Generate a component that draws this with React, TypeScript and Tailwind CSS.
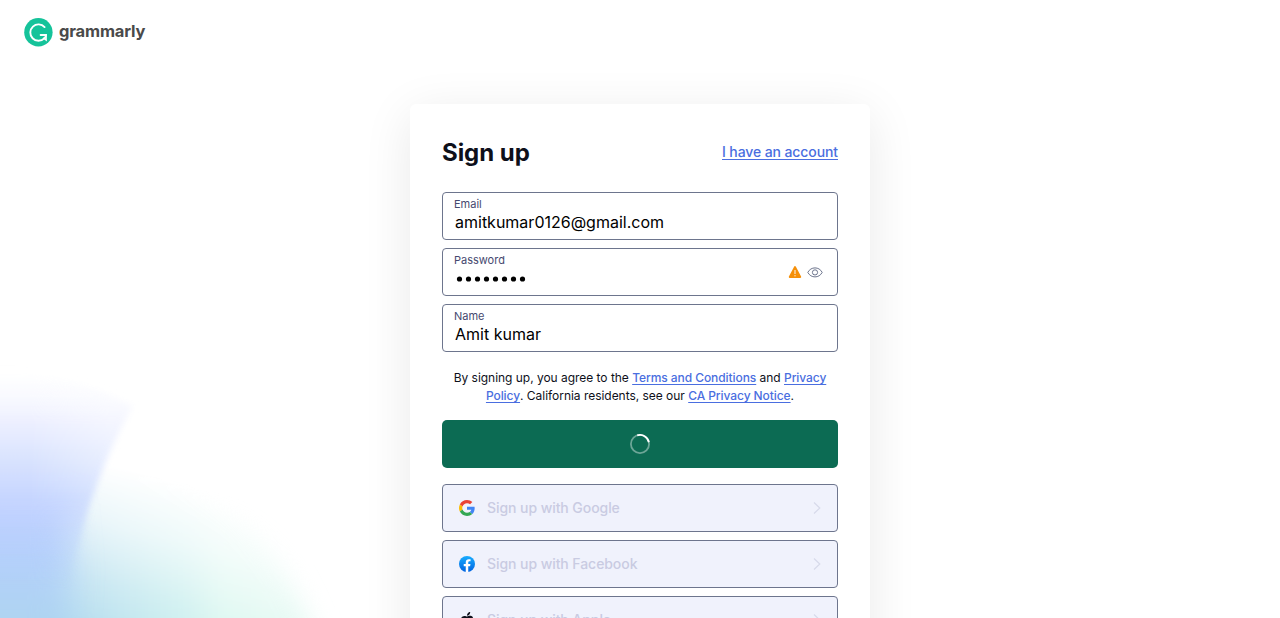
import type { ReactNode } from "react";

function Backdrop() {
  return (
    <svg
      className="pointer-events-none absolute bottom-0 left-0"
      width="400"
      height="268"
      viewBox="0 350 400 268"
      aria-hidden="true"
    >
      <defs>
        <linearGradient id="mint" gradientUnits="userSpaceOnUse" x1="0" y1="0" x2="350" y2="0">
          <stop offset="0" stopColor="#a9d2f3" />
          <stop offset="0.28" stopColor="#b7dfee" />
          <stop offset="0.54" stopColor="#c6eeec" />
          <stop offset="0.63" stopColor="#d6f6ee" />
          <stop offset="0.85" stopColor="#dcf8ef" />
          <stop offset="1" stopColor="#f2fdf9" />
        </linearGradient>
        <linearGradient id="fade" gradientUnits="userSpaceOnUse" x1="50" y1="450" x2="10" y2="612">
          <stop offset="0" stopColor="#fff" stopOpacity="0" />
          <stop offset="0.35" stopColor="#fff" stopOpacity="0.3" />
          <stop offset="0.7" stopColor="#fff" stopOpacity="0.72" />
          <stop offset="1" stopColor="#fff" />
        </linearGradient>
        <mask id="fadeMask" maskUnits="userSpaceOnUse" x="-20" y="350" width="420" height="300">
          <rect x="-20" y="350" width="420" height="300" fill="url(#fade)" />
        </mask>
        <linearGradient id="blue" gradientUnits="userSpaceOnUse" x1="0" y1="370" x2="0" y2="618">
          <stop offset="0" stopColor="#f8faff" stopOpacity="0" />
          <stop offset="0.2" stopColor="#eef0ff" />
          <stop offset="0.36" stopColor="#d9e3fe" />
          <stop offset="0.58" stopColor="#bfd0ff" />
          <stop offset="0.78" stopColor="#b4d0fb" />
          <stop offset="1" stopColor="#aed4f1" />
        </linearGradient>
        <linearGradient id="base" gradientUnits="userSpaceOnUse" x1="0" y1="500" x2="0" y2="618">
          <stop offset="0" stopColor="#bfd0ff" />
          <stop offset="0.5" stopColor="#b4d0fb" />
          <stop offset="1" stopColor="#aed4f1" />
        </linearGradient>
        <linearGradient id="side" gradientUnits="userSpaceOnUse" x1="0" y1="500" x2="0" y2="590">
          <stop offset="0" stopColor="#fff" />
          <stop offset="1" stopColor="#fff" stopOpacity="0" />
        </linearGradient>
        <linearGradient id="across" gradientUnits="userSpaceOnUse" x1="30" y1="0" x2="110" y2="0">
          <stop offset="0" stopColor="#fff" />
          <stop offset="1" stopColor="#fff" stopOpacity="0.6" />
        </linearGradient>
        <mask id="sideMask" maskUnits="userSpaceOnUse" x="-20" y="350" width="240" height="300">
          <rect x="-20" y="350" width="240" height="300" fill="url(#side)" />
        </mask>
        <mask id="acrossMask" maskUnits="userSpaceOnUse" x="-20" y="350" width="240" height="300">
          <rect x="-20" y="350" width="240" height="300" fill="url(#across)" />
        </mask>
        <filter id="soft" x="-20%" y="-20%" width="140%" height="140%">
          <feGaussianBlur stdDeviation="12" />
        </filter>
        <filter id="edge" x="-20%" y="-20%" width="140%" height="140%">
          <feGaussianBlur stdDeviation="3" />
        </filter>
        <filter id="wide" x="-40%" y="-40%" width="180%" height="180%">
          <feGaussianBlur stdDeviation="16" />
        </filter>
      </defs>
      <g mask="url(#fadeMask)">
        <path
          d="M-60 400 L100 440 Q178 475 238 515 Q284 552 314 628 L330 690 L-60 690Z"
          fill="url(#mint)"
          filter="url(#soft)"
        />
      </g>
      <path d="M-80 505 L62 505 L68 570 L58 700 L-80 700Z" fill="url(#base)" filter="url(#wide)" />
      <g mask="url(#acrossMask)">
        <g mask="url(#sideMask)">
          <path
            d="M-40 368 C40 366 90 384 133 406 C112 442 100 475 88 510 L72 570 L60 660 L-40 660Z"
            fill="url(#blue)"
            filter="url(#edge)"
          />
        </g>
      </g>
    </svg>
  );
}

function Logo() {
  return (
    <div className="flex h-[29px] items-center">
      <svg width="29" height="29" viewBox="0 0 29 29" aria-hidden="true">
        <circle cx="14.4" cy="14.3" r="14.2" fill="#15c39a" />
        <path
          d="M20.6 9.1 A8.2 8.2 0 1 0 20.3 20.4"
          fill="none"
          stroke="#fff"
          strokeWidth="1.9"
          strokeLinecap="round"
        />
        <path d="M16.6 17 H22 Q21.8 19 20.3 20.4" fill="none" stroke="#fff" strokeWidth="1.8" strokeLinecap="round" />
        <path d="M22.1 17 V22 L19.8 20.2" fill="none" stroke="#fff" strokeWidth="1.5" strokeLinecap="round" />
      </svg>
      <span className="ml-[6px] -mt-[3px] text-[16.5px] leading-none font-bold tracking-[-0.16px] text-[#4a4a4a]">
        grammarly
      </span>
    </div>
  );
}

function Field({ label, children, icons }: { label: string; children: ReactNode; icons?: ReactNode }) {
  return (
    <div className="flex h-12 items-center justify-between rounded-[4px] border border-[#6d758d] bg-white pr-[14px] pl-[11px]">
      <div className="flex h-full flex-col">
        <span className="mt-[4px] text-[11px] leading-[14px] text-[#46496f]">{label}</span>
        <span className="flex h-[22px] items-center pl-px text-[16px] leading-[22px] text-black">{children}</span>
      </div>
      {icons}
    </div>
  );
}

function PasswordIcons() {
  return (
    <div className="flex items-center gap-[5px]">
      <svg width="14" height="14" viewBox="0 0 14 14" aria-hidden="true">
        <path d="M7 2 L12.3 12 H1.7 Z" fill="#f5900a" stroke="#f5900a" strokeWidth="1.8" strokeLinejoin="round" />
        <path d="M7 5 V8.9" stroke="#fff" strokeOpacity="0.8" strokeWidth="1.2" />
        <circle cx="7" cy="10.7" r="0.7" fill="#fff" fillOpacity="0.8" />
      </svg>
      <svg width="16" height="14" viewBox="0 0 16 14" fill="none" stroke="#6d758d" aria-hidden="true">
        <path d="M.8 7.4 C2.4 4.4 5 2.9 8 2.9 S13.6 4.4 15.2 7.4 C13.6 10.4 11 11.9 8 11.9 S2.4 10.4 .8 7.4Z" strokeWidth="1" />
        <circle cx="8" cy="7.4" r="2.6" strokeWidth="1" />
      </svg>
    </div>
  );
}

function GoogleIcon() {
  return (
    <svg width="16" height="16" viewBox="0 0 48 48" aria-hidden="true">
      <path fill="#EA4335" d="M24 9.5c3.54 0 6.71 1.22 9.21 3.6l6.85-6.85C35.9 2.38 30.47 0 24 0 14.62 0 6.51 5.38 2.56 13.22l7.98 6.19C12.43 13.72 17.74 9.5 24 9.5z" />
      <path fill="#4285F4" d="M46.98 24.55c0-1.57-.15-3.09-.38-4.55H24v9.02h12.94c-.58 2.96-2.26 5.48-4.78 7.18l7.73 6c4.51-4.18 7.09-10.36 7.09-17.65z" />
      <path fill="#FBBC05" d="M10.53 28.59c-.48-1.45-.76-2.99-.76-4.59s.27-3.14.76-4.59l-7.98-6.19C.92 16.46 0 20.12 0 24c0 3.88.92 7.54 2.56 10.78l7.97-6.19z" />
      <path fill="#34A853" d="M24 48c6.48 0 11.93-2.13 15.89-5.81l-7.73-6c-2.15 1.45-4.92 2.3-8.16 2.3-6.26 0-11.57-4.22-13.47-9.91l-7.98 6.19C6.51 42.62 14.62 48 24 48z" />
    </svg>
  );
}

function FacebookIcon() {
  return (
    <svg width="16" height="16" viewBox="0 0 24 24" aria-hidden="true">
      <defs>
        <linearGradient id="fb" x1="0" y1="0" x2="0" y2="1">
          <stop offset="0" stopColor="#18acfe" />
          <stop offset="1" stopColor="#0163e0" />
        </linearGradient>
      </defs>
      <circle cx="12" cy="12" r="12" fill="url(#fb)" />
      <path
        fill="#fff"
        d="M16.67 15.47 17.2 12h-3.33V9.75c0-.95.47-1.87 1.96-1.87h1.51V4.92s-1.37-.23-2.68-.23c-2.74 0-4.53 1.66-4.53 4.67V12H7.08v3.47h3.05v8.39a12 12 0 0 0 3.74 0v-8.39z"
      />
    </svg>
  );
}

function AppleIcon() {
  return (
    <svg width="16" height="16" viewBox="0 0 24 24" fill="#0e101a" aria-hidden="true">
      <path d="M12.152 6.896c-.948 0-2.415-1.078-3.96-1.04-2.04.027-3.91 1.183-4.961 3.014-2.117 3.675-.546 9.103 1.519 12.09 1.013 1.454 2.208 3.09 3.792 3.039 1.52-.065 2.09-.987 3.935-.987 1.831 0 2.35.987 3.96.948 1.637-.026 2.676-1.48 3.676-2.948 1.156-1.688 1.636-3.325 1.662-3.415-.039-.013-3.182-1.221-3.22-4.857-.026-3.04 2.48-4.494 2.597-4.559-1.429-2.09-3.623-2.324-4.39-2.376-2-.156-3.675 1.09-4.61 1.09zM15.53 3.83c.843-1.012 1.4-2.427 1.245-3.83-1.207.052-2.662.805-3.532 1.818-.78.896-1.454 2.338-1.273 3.714 1.338.104 2.715-.688 3.559-1.701" />
    </svg>
  );
}

function SocialButton({ icon, label }: { icon: ReactNode; label: string }) {
  return (
    <button
      disabled
      className="flex h-12 w-full shrink-0 items-center rounded-[4px] border border-[#6d758d] bg-[#f0f2fc] pr-4 pl-4 text-left"
    >
      {icon}
      <span className="ml-3 flex-1 text-[14px] leading-5 font-medium tracking-[-0.07px] text-[#c9cbe2]">{label}</span>
      <svg width="8" height="14" viewBox="0 0 8 14" fill="none" aria-hidden="true">
        <path d="M1 1.5 L6.8 7 L1 12.5" stroke="#d7daea" strokeWidth="1.2" />
      </svg>
    </button>
  );
}

function TextLink({ children }: { children: ReactNode }) {
  return (
    <a
      href="#"
      className="font-medium tracking-[-0.07px] text-[#4a6ee0] underline decoration-1 underline-offset-2 [text-decoration-skip-ink:none]"
    >
      {children}
    </a>
  );
}

export default function App() {
  return (
    <div className="relative h-[618px] w-full overflow-hidden bg-white font-['Inter','Liberation_Sans',sans-serif]">
      <Backdrop />
      <header className="relative h-[104px] px-6 pt-[18px]">
        <Logo />
      </header>
      <main className="relative mx-auto h-[640px] w-[460px] rounded-md bg-white px-8 pt-[34px] shadow-[0_10px_50px_rgba(0,0,0,0.09)]">
        <div className="flex h-[30px] items-center justify-between">
          <h1 className="text-[24px] leading-[30px] font-bold tracking-[-0.05px] text-[#0e101a]">Sign up</h1>
          <a
            href="#"
            className="-mt-0.5 border-b border-[#4a6ee0] text-[14px] leading-[15px] font-medium tracking-[-0.1px] text-[#4a6ee0]"
          >
            I have an account
          </a>
        </div>
        <form className="mt-6 flex flex-col gap-2">
          <Field label="Email">amitkumar0126@gmail.com</Field>
          <Field label="Password" icons={<PasswordIcons />}>
            <svg width="72" height="6" viewBox="0 0 72 6" className="mt-[2px]" aria-hidden="true">
              {Array.from({ length: 8 }, (_, i) => (
                <circle key={i} cx={4.5 + i * 9} cy="3" r="2.6" />
              ))}
            </svg>
          </Field>
          <Field label="Name">Amit kumar</Field>
        </form>
        <p className="mt-[17px] text-center text-[12px] leading-[18px] tracking-[-0.03px] text-[#0e101a]">
          By signing up, you agree to the <TextLink>Terms and Conditions</TextLink> and <TextLink>Privacy</TextLink>
          <br />
          <TextLink>Policy</TextLink>. California residents, see our <TextLink>CA Privacy Notice</TextLink>.
        </p>
        <button className="mt-[15px] flex h-12 w-full items-center justify-center rounded-[5px] bg-[#0c6b53]" aria-label="Signing up">
          <svg width="20" height="20" viewBox="0 0 20 20" fill="none" strokeWidth="1.8" aria-hidden="true">
            <circle cx="10" cy="10" r="9.1" stroke="#fff" strokeOpacity="0.4" />
            <path d="M7.2 1.35 A9.1 9.1 0 0 1 18.9 8.2" stroke="#fff" />
          </svg>
        </button>
        <div className="mt-4 flex flex-col gap-2">
          <SocialButton icon={<GoogleIcon />} label="Sign up with Google" />
          <SocialButton icon={<FacebookIcon />} label="Sign up with Facebook" />
          <SocialButton icon={<AppleIcon />} label="Sign up with Apple" />
        </div>
      </main>
    </div>
  );
}
